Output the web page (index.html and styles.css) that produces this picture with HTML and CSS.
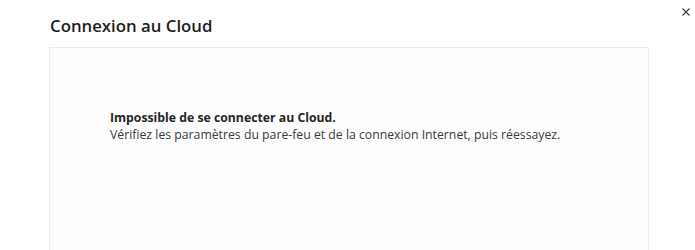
FILE: index.html
```html
<!DOCTYPE html>
<html lang="fr">

<head>
    <meta charset="UTF-8">
    <meta name="viewport" content="width=device-width, initial-scale=1.0">
    <title>Connexion au Cloud</title>
    <link rel="stylesheet" href="styles.css">
</head>

<body>
    <div class="dialog">
        <button class="close" aria-label="Fermer">
            <svg width="8" height="8" viewBox="0 0 8 8">
                <path d="M0.5 0.5 L7.5 7.5 M7.5 0.5 L0.5 7.5" stroke="#3a3a4a" stroke-width="1.1" fill="none" />
            </svg>
        </button>
        <h1 class="title">Connexion au Cloud</h1>
        <div class="panel">
            <div class="message">
                <div class="message-head">Impossible de se connecter au Cloud.</div>
                <div class="message-body">Vérifiez les paramètres du pare-feu et de la connexion Internet, puis réessayez.</div>
            </div>
        </div>
    </div>
</body>

</html>
```

FILE: styles.css
```css
html,
body {
    margin: 0;
    height: 100%;
    background: #ffffff;
}

body {
    font-family: "Open Sans", "Noto Sans", sans-serif;
    color: #2b2b2b;
    overflow: hidden;
}

.dialog {
    position: relative;
    padding: 13px 46px 0 49px;
    height: 100%;
    box-sizing: border-box;
    display: flex;
    flex-direction: column;
}

.close {
    position: absolute;
    top: 8px;
    right: 5px;
    width: 8px;
    height: 8px;
    padding: 0;
    border: 0;
    background: none;
    display: flex;
}

.title {
    margin: 0 0 9px 1px;
    font-size: 16.8px;
    font-weight: 600;
    line-height: 25px;
    color: #1e1e1e;
}

.panel {
    flex: 1;
    border: 1px solid #e9ecef;
    border-bottom: 0;
    background: #fdfdfd;
    padding: 61px 0 0 60px;
}

.message {
    font-size: 12.25px;
    line-height: 17px;
}

.message-head {
    font-weight: 700;
    color: #262626;
}

.message-body {
    color: #3a3a3a;
}
```
